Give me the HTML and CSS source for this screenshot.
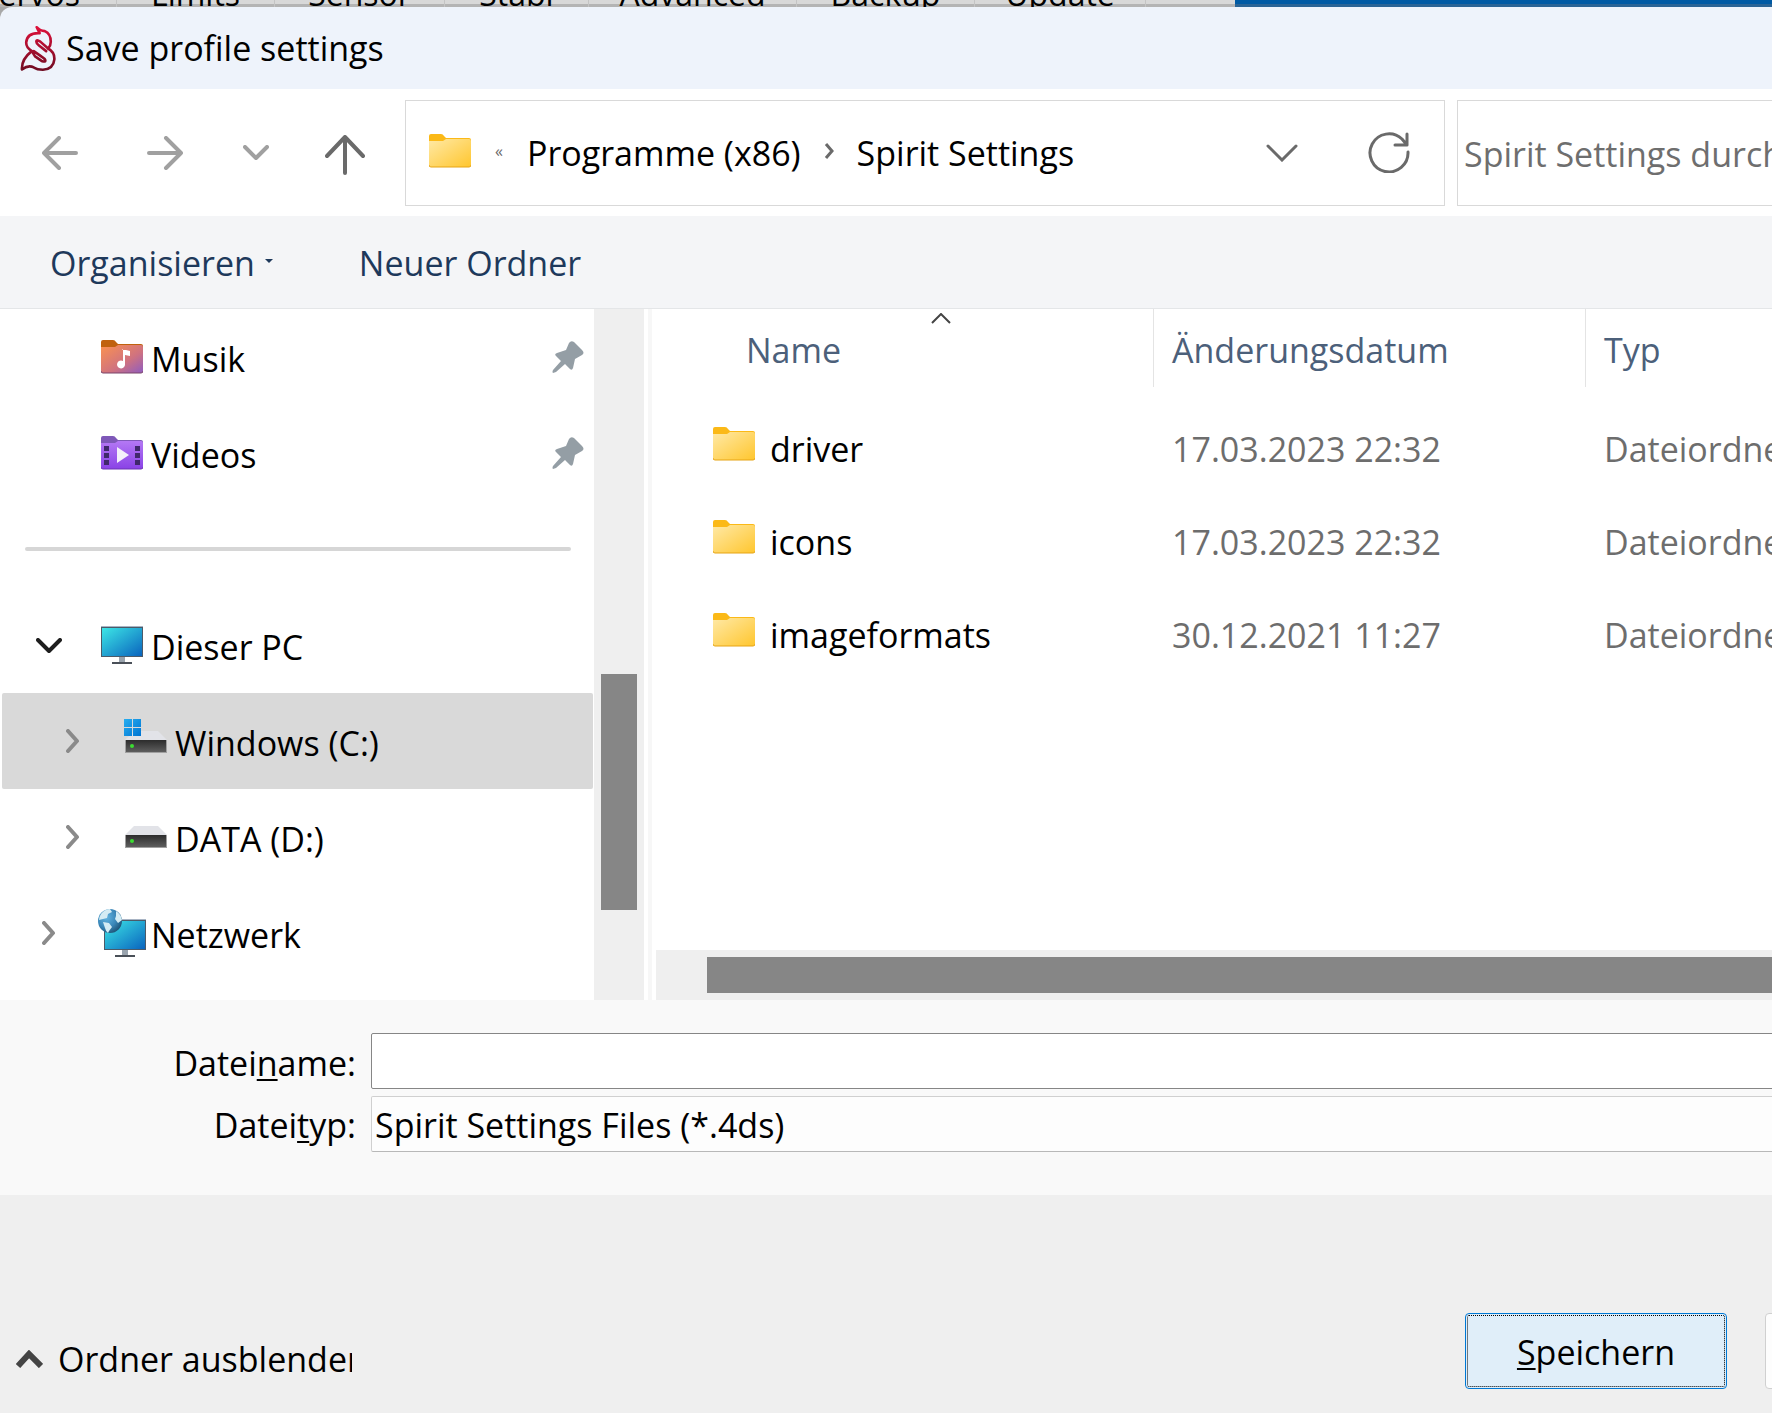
FILE: index.html
```html
<!DOCTYPE html>
<html lang="de">
  <head>
    <meta charset="UTF-8" />
    <meta name="viewport" content="width=device-width, initial-scale=1.0" />
    <title>Save profile settings</title>
    <link rel="stylesheet" href="styles.css">
  </head>
  <body>
    <!-- Shared icon shapes -->
    <svg class="defs" width="0" height="0" aria-hidden="true">
      <defs>
        <linearGradient id="gFolder" x1="0" y1="0" x2="1" y2="1">
          <stop offset="0" stop-color="#ffe9a6" />
          <stop offset="1" stop-color="#ffc62e" />
        </linearGradient>
        <linearGradient id="gMusic" x1="0" y1="0" x2="1" y2="1">
          <stop offset="0" stop-color="#fb9250" />
          <stop offset="0.6" stop-color="#cf7280" />
          <stop offset="1" stop-color="#8f5cc0" />
        </linearGradient>
        <linearGradient id="gVideo" x1="0" y1="0" x2="0" y2="1">
          <stop offset="0" stop-color="#b478f4" />
          <stop offset="1" stop-color="#8a42e6" />
        </linearGradient>
        <linearGradient id="gScreen" x1="0" y1="0" x2="1" y2="1">
          <stop offset="0" stop-color="#3ce6e6" />
          <stop offset="1" stop-color="#0a64be" />
        </linearGradient>
        <linearGradient id="gDrive" x1="0" y1="0" x2="0" y2="1">
          <stop offset="0" stop-color="#2c2c2c" />
          <stop offset="1" stop-color="#5e5e5e" />
        </linearGradient>
        <linearGradient id="gWin" x1="0" y1="0" x2="1" y2="1">
          <stop offset="0" stop-color="#27aef0" />
          <stop offset="1" stop-color="#0074d2" />
        </linearGradient>
        <linearGradient id="gLogo" x1="0" y1="20" x2="0" y2="158" gradientUnits="userSpaceOnUse">
          <stop offset="0" stop-color="#e0103a" />
          <stop offset="1" stop-color="#6e0c22" />
        </linearGradient>
        <radialGradient id="gGlobe" cx="0.35" cy="0.35" r="0.7">
          <stop offset="0" stop-color="#62b4e0" />
          <stop offset="0.6" stop-color="#3a86b8" />
          <stop offset="1" stop-color="#1f5578" />
        </radialGradient>
        <symbol id="folder" viewBox="0 0 42 34">
          <path d="M0 9V2q0-2 2-2h10q2 0 3 2l2 2h23q2 0 2 2v6H0z" fill="#fbb917" />
          <path d="M0 7h14l3-2h23q2 0 2 2v24q0 2-2 2H2q-2 0-2-2z" fill="url(#gFolder)" />
          <path d="M0 31q0 2 2 2h38q2 0 2-2" fill="none" stroke="#e6a415" />
        </symbol>
        <symbol id="folder-music" viewBox="0 0 42 34">
          <path d="M0 9V2q0-2 2-2h10q2 0 3 2l2 2h23q2 0 2 2v6H0z" fill="#c0620e" />
          <path d="M0 7h14l3-2h23q2 0 2 2v24q0 2-2 2H2q-2 0-2-2z" fill="url(#gMusic)" />
          <path d="M0 31q0 2 2 2h38q2 0 2-2" fill="none" stroke="#7a4468" />
          <path d="M21 9l8 2v5l-5-1v10a4 4 0 1 1-2-4V9z" fill="#fff" />
        </symbol>
        <symbol id="folder-video" viewBox="0 0 42 34">
          <path d="M0 9V2q0-2 2-2h10q2 0 3 2l2 2h23q2 0 2 2v6H0z" fill="#7e58b8" />
          <path d="M0 7h14l3-2h23q2 0 2 2v24q0 2-2 2H2q-2 0-2-2z" fill="url(#gVideo)" />
          <path d="M0 31q0 2 2 2h38q2 0 2-2" fill="none" stroke="#6c34b4" />
          <path d="M3 10h5v5H3zM3 17h5v5H3zM3 24h5v5H3zM34 10h5v5h-5zM34 17h5v5h-5zM34 24h5v5h-5z" fill="#40286c" />
          <path d="M16 11l12 8-12 8z" fill="#f4f0fa" />
        </symbol>
        <symbol id="monitor" viewBox="0 0 42 38">
          <path d="M18 31h6v5h-6z" fill="#9aa4ae" />
          <path d="M11 36h20v2H11z" fill="#4a5058" />
          <path d="M0 0h42v31H0z" fill="#4c5a68" />
          <path d="M0 0h42v1H0z" fill="#a8b4c4" />
          <path d="M1 2h40v28H1z" fill="url(#gScreen)" />
        </symbol>
        <symbol id="drive" viewBox="0 0 42 22">
          <path d="M9 0h24l9 9H0z" fill="#e2e3e8" />
          <path d="M0 9h42v13H0z" fill="#a0a0a0" />
          <path d="M1 9h40v12H1z" fill="url(#gDrive)" />
          <circle cx="7" cy="15" r="2" fill="#3cdc32" />
        </symbol>
        <symbol id="pin" viewBox="0 0 32 32">
          <path d="M17 2q2-3 5-1l8 8q3 3 0 5l-7 4-2 9q-1 3-3 1l-5-5-9 8-3 1q-1-1 0-3l8-9-5-5q-2-2 1-3l9-3z" fill="#949ea5" />
        </symbol>
        <symbol id="chevron-right" viewBox="0 0 14 24">
          <path d="M2 2l9 10-9 10" fill="none" stroke="currentColor" stroke-width="4" stroke-linecap="round" stroke-linejoin="round" />
        </symbol>
        <symbol id="chevron-down" viewBox="0 0 26 16">
          <path d="M2 2l11 11L24 2" fill="none" stroke="currentColor" stroke-width="4" stroke-linecap="round" stroke-linejoin="round" />
        </symbol>
      </defs>
    </svg>

    <!-- Window behind the dialog -->
    <div class="back-window">
      <span class="back-tab tab-servos">Servos</span>
      <span class="back-tab tab-limits">Limits</span>
      <span class="back-tab tab-sensor">Sensor</span>
      <span class="back-tab tab-stabi">Stabi</span>
      <span class="back-tab tab-advanced">Advanced</span>
      <span class="back-tab tab-backup">Backup</span>
      <span class="back-tab tab-update">Update</span>
      <span class="back-tab tab-empty"></span>
    </div>

    <div class="dialog">
      <header class="title-bar">
        <svg class="logo" width="36" height="47" viewBox="28 18 110 142" fill="none" stroke="url(#gLogo)" stroke-width="8" stroke-linejoin="round" stroke-linecap="round">
          <path d="M64 97Q46 86 47 70Q50 40 88 42L79 24Q90 36 104 36Q122 44 122 68Q122 80 114 89Q134 100 133 122Q130 152 98 154Q80 154 70 147Q54 138 34 153Q32 122 64 97z" />
          <path d="M114 89L90 68Q78 60 78 68Q78 74 86 80L108 97" />
          <path d="M64 97L74 113L94 127Q108 132 105 124Q103 120 94 114L70 97" />
        </svg>
        <h1>Save profile settings</h1>
      </header>

      <div class="nav-bar">
        <button class="nav-btn" aria-label="Zurück">
          <svg width="36" height="34" viewBox="0 0 36 34" fill="none" stroke="currentColor" stroke-width="4" stroke-linecap="round" stroke-linejoin="round"><path d="M17 2L2 17l15 15M2 17h32" /></svg>
        </button>
        <button class="nav-btn nav-forward" aria-label="Vorwärts">
          <svg width="36" height="34" viewBox="0 0 36 34" fill="none" stroke="currentColor" stroke-width="4" stroke-linecap="round" stroke-linejoin="round"><path d="M19 2l15 15-15 15M34 17H2" /></svg>
        </button>
        <button class="nav-btn nav-recent" aria-label="Zuletzt besucht">
          <svg width="26" height="16"><use href="#chevron-down" /></svg>
        </button>
        <button class="nav-btn nav-up" aria-label="Nach oben">
          <svg width="40" height="40" viewBox="0 0 40 40" fill="none" stroke="currentColor" stroke-width="4" stroke-linecap="round" stroke-linejoin="round"><path d="M2 21L20 2l18 19M20 2v36" /></svg>
        </button>
        <div class="address">
          <svg class="address-icon" width="42" height="34"><use href="#folder" /></svg>
          <span class="more">«</span>
          <a href="#">Programme (x86)</a>
          <svg class="crumb-arrow" width="10" height="16" viewBox="0 0 10 16" fill="none" stroke="currentColor" stroke-width="3"><path d="M2 1l6 7-6 7" /></svg>
          <a href="#">Spirit Settings</a>
          <button class="address-drop" aria-label="Vorherige Orte">
            <svg width="32" height="18" viewBox="0 0 32 18" fill="none" stroke="currentColor" stroke-width="3" stroke-linecap="round"><path d="M2 2l14 14L30 2" /></svg>
          </button>
          <button class="address-reload" aria-label="Aktualisieren">
            <svg width="42" height="42" viewBox="0 0 42 42" fill="none" stroke="currentColor" stroke-width="3" stroke-linecap="round" stroke-linejoin="round"><path d="M40 21a19 19 0 1 1-6-13l5 6M39 3v11H27" /></svg>
          </button>
        </div>
        <input class="search" type="text" aria-label="Suchen" placeholder="Spirit Settings durchsuchen">
      </div>

      <div class="toolbar">
        <button>Organisieren <span class="caret"></span></button>
        <button>Neuer Ordner</button>
      </div>

      <div class="content">
        <nav class="sidebar">
          <ul>
            <li>
              <span class="expander"></span>
              <a href="#"><svg width="42" height="34"><use href="#folder-music" /></svg>Musik</a>
              <svg class="pin" width="32" height="32"><use href="#pin" /></svg>
            </li>
            <li>
              <span class="expander"></span>
              <a href="#"><svg width="42" height="34"><use href="#folder-video" /></svg>Videos</a>
              <svg class="pin" width="32" height="32"><use href="#pin" /></svg>
            </li>
            <li class="divider"></li>
            <li>
              <button class="expander open" aria-label="Dieser PC einklappen"><svg width="26" height="16"><use href="#chevron-down" /></svg></button>
              <a href="#"><svg width="42" height="38"><use href="#monitor" /></svg>Dieser PC</a>
            </li>
            <li class="child selected">
              <button class="expander" aria-label="Windows (C:) ausklappen"><svg width="14" height="24"><use href="#chevron-right" /></svg></button>
              <a href="#">
                <svg width="42" height="44" viewBox="0 0 42 44" overflow="visible">
                  <use href="#drive" y="12" width="42" height="22" />
                  <path d="M-1 0h8v8h-8zM8 0h8v8H8zM-1 9h8v8h-8zM8 9h8v8H8z" fill="url(#gWin)" />
                </svg>Windows (C:)</a>
            </li>
            <li class="child">
              <button class="expander" aria-label="DATA (D:) ausklappen"><svg width="14" height="24"><use href="#chevron-right" /></svg></button>
              <a href="#"><svg width="42" height="22"><use href="#drive" /></svg>DATA (D:)</a>
            </li>
            <li>
              <button class="expander" aria-label="Netzwerk ausklappen"><svg width="14" height="24"><use href="#chevron-right" /></svg></button>
              <a href="#">
                <svg width="42" height="48" viewBox="0 0 42 48" overflow="visible">
                  <use href="#monitor" x="3" y="10" width="42" height="38" />
                  <circle cx="9" cy="12" r="12" fill="url(#gGlobe)" />
                  <path d="M0 5q4-5 9-5l2 3-4 2-1 4-4 1-4 1q0-3 2-6zM2 13l6 1 3 4-3 4-1 2q-2-1-3-5zM15 2q5 3 6 9l-4 3-3-4 1-3z" fill="#d4ecf4" />
                </svg>Netzwerk</a>
            </li>
          </ul>
        </nav>
        <div class="scroll-v"><div class="thumb"></div></div>
        <div class="splitter"></div>

        <main class="files">
          <table>
            <thead>
              <tr>
                <th class="col-name">Name
                  <svg class="sort" width="20" height="11" viewBox="0 0 20 11" fill="none" stroke="#444" stroke-width="2"><path d="M1 10l9-9 9 9" /></svg>
                </th>
                <th class="col-date">Änderungsdatum</th>
                <th class="col-type">Typ</th>
              </tr>
            </thead>
            <tbody>
              <tr>
                <td class="name"><svg width="42" height="34"><use href="#folder" /></svg>driver</td>
                <td>17.03.2023 22:32</td>
                <td>Dateiordner</td>
              </tr>
              <tr>
                <td class="name"><svg width="42" height="34"><use href="#folder" /></svg>icons</td>
                <td>17.03.2023 22:32</td>
                <td>Dateiordner</td>
              </tr>
              <tr>
                <td class="name"><svg width="42" height="34"><use href="#folder" /></svg>imageformats</td>
                <td>30.12.2021 11:27</td>
                <td>Dateiordner</td>
              </tr>
            </tbody>
          </table>
          <div class="scroll-h"><div class="thumb"></div></div>
        </main>
      </div>

      <form class="file-form">
        <label for="fileName">Datei<u>n</u>ame:</label>
        <input id="fileName" type="text">
        <label for="fileType">Datei<u>t</u>yp:</label>
        <select id="fileType">
          <option>Spirit Settings Files (*.4ds)</option>
        </select>
      </form>

      <footer class="footer">
        <button class="hide-folders">
          <svg width="27" height="18" viewBox="0 0 27 18" fill="none" stroke="#444" stroke-width="6"><path d="M2 16L13 4l12 12" /></svg>
          <span>Ordner ausblenden</span>
        </button>
        <button class="btn btn-save"><u>S</u>peichern</button>
        <button class="btn" aria-label="Abbrechen"></button>
      </footer>
    </div>
  </body>
</html>
```
FILE: styles.css
```css
* {
  box-sizing: border-box;
}
body {
  margin: 0;
  min-height: 100vh;
  display: flex;
  flex-direction: column;
  font-family: "Open Sans", "Noto Sans", sans-serif;
  font-size: 34px;
  line-height: 48px;
  color: #000;
  background: #efefef;
  overflow: hidden;
}
button,
input,
select {
  font: inherit;
  color: inherit;
}
button {
  padding: 0;
  border: none;
  background: none;
  cursor: pointer;
}
a {
  color: inherit;
  text-decoration: none;
}
ul {
  list-style: none;
  margin: 0;
  padding: 0;
}
svg {
  display: block;
  flex: none;
}
u {
  text-decoration-thickness: 2px;
  text-underline-offset: 3px;
}
.defs {
  position: absolute;
}

/* Window behind the dialog */
.back-window {
  display: flex;
  align-items: flex-end;
  height: 7px;
  background: linear-gradient(#005aa4 4px, #2a6496 4px);
  overflow: hidden;
}
.back-tab {
  flex: none;
  height: 40px;
  font-size: 32px;
  line-height: 54px;
  text-align: center;
  background: linear-gradient(#d8d8d8 37px, #b4b4b4 37px);
  border-right: 1px solid #c4c4c4;
}
.tab-servos {
  width: 117px;
  padding-right: 36px;
  direction: rtl;
}
.tab-limits {
  width: 158px;
}
.tab-sensor {
  width: 170px;
}
.tab-stabi {
  width: 144px;
}
.tab-advanced {
  width: 208px;
}
.tab-backup {
  width: 178px;
}
.tab-update {
  width: 171px;
}
.tab-empty {
  width: 89px;
  border: none;
}

/* Dialog */
.dialog {
  flex: 1;
  display: flex;
  flex-direction: column;
  background: #a8a8a8;
}
.title-bar {
  display: flex;
  align-items: center;
  gap: 10px;
  height: 82px;
  padding-left: 20px;
  background: #eef3fb;
  border-top-left-radius: 12px;
}
.title-bar h1 {
  margin: 0;
  font-size: 34px;
  font-weight: 400;
}

/* Navigation */
.nav-bar {
  display: flex;
  align-items: center;
  height: 127px;
  padding-left: 42px;
  background: #fff;
}
.nav-btn {
  color: #a0a0a0;
}
.nav-forward {
  margin-left: 69px;
}
.nav-recent {
  margin-left: 60px;
}
.nav-up {
  margin-left: 56px;
  padding-top: 4px;
  color: #6a6a6a;
}
.address {
  flex: 1;
  display: flex;
  align-items: center;
  height: 106px;
  margin-left: 40px;
  padding: 0 34px 0 23px;
  border: 1px solid #d9d9d9;
}
.address button {
  color: #6a6a6a;
}
.address-icon {
  margin-bottom: 4px;
}
.more {
  margin: 0 24px;
  padding-bottom: 4px;
  font-size: 16px;
  color: #6a6a6a;
}
.crumb-arrow {
  margin: 0 23px 4px;
  color: #6a6a6a;
}
.address .address-drop {
  margin-left: auto;
  margin-right: 70px;
}
.address-reload {
  padding-bottom: 2px;
}
.search {
  width: 340px;
  height: 106px;
  margin-left: 12px;
  margin-right: -25px;
  padding: 2px 6px 0;
  border: 1px solid #d9d9d9;
  background: #fff;
}
.search::placeholder {
  color: #6e6e6e;
  opacity: 1;
}

/* Toolbar */
.toolbar {
  display: flex;
  align-items: center;
  gap: 86px;
  height: 93px;
  padding-top: 2px;
  padding-left: 50px;
  background: #f4f5f7;
  border-bottom: 1px solid #e4e6e8;
  color: #1e395b;
}
.toolbar button {
  display: flex;
  align-items: center;
  gap: 10px;
}
.caret {
  margin-bottom: 4px;
  border: 4px solid transparent;
  border-top-color: #1e395b;
  border-bottom: none;
}

/* Sidebar */
.content {
  display: flex;
  height: 691px;
  background: #fff;
}
.sidebar {
  width: 594px;
  padding: 0 1px 0 2px;
}
.sidebar li {
  display: flex;
  align-items: center;
  height: 96px;
  padding-top: 4px;
  padding-left: 32px;
}
.sidebar .child {
  padding-left: 56px;
}
.sidebar a {
  display: flex;
  align-items: center;
  gap: 8px;
}
.sidebar a svg {
  margin-bottom: 4px;
}
.sidebar .selected {
  background: #d9d9d9;
  border-radius: 2px;
}
.expander {
  display: flex;
  justify-content: center;
  width: 30px;
  margin-right: 37px;
  margin-bottom: 4px;
  color: #8a8a8a;
}
.expander.open {
  margin-bottom: 2px;
  color: #1e1e1e;
}
.pin {
  margin-left: auto;
  margin-right: 9px;
  margin-bottom: 4px;
}
.sidebar .divider {
  padding: 0 22px 0 23px;
}
.divider::before {
  content: "";
  flex: 1;
  height: 4px;
  border-radius: 2px;
  background: #d6d6d6;
}
.scroll-v {
  width: 50px;
  padding: 365px 7px 0;
  background: #efefef;
}
.scroll-v .thumb {
  height: 236px;
}
.thumb {
  background: #868686;
}
.splitter {
  width: 12px;
  border: 4px solid #fff;
  border-top: none;
  border-bottom: none;
  background: #f7f7f7;
}

/* File list */
.files {
  flex: 1;
  min-width: 0;
  display: flex;
  flex-direction: column;
  justify-content: space-between;
  overflow: hidden;
}
.files table {
  width: 1240px;
  table-layout: fixed;
  border-collapse: separate;
  border-spacing: 0;
}
.files th {
  position: relative;
  height: 78px;
  padding: 4px 18px 0;
  border-right: 1px solid #e4e4e4;
  font-weight: 400;
  text-align: left;
  color: #4c607a;
}
.files .col-name {
  width: 498px;
  padding-left: 90px;
}
.col-date {
  width: 432px;
}
.sort {
  position: absolute;
  top: 4px;
  left: 275px;
}
.files tbody::before {
  content: "";
  display: block;
  height: 15px;
}
.files td {
  height: 93px;
  padding: 0 18px;
  color: #6d6d6d;
}
.files .name {
  display: flex;
  align-items: center;
  gap: 15px;
  padding-left: 57px;
  color: #000;
}
.name svg {
  margin-bottom: 10px;
}
.scroll-h {
  height: 50px;
  padding: 7px 0 7px 51px;
  background: #efefef;
}
.scroll-h .thumb {
  height: 36px;
}

/* File name and type */
.file-form {
  display: grid;
  grid-template-columns: 356px 1fr;
  column-gap: 15px;
  row-gap: 6px;
  align-items: center;
  height: 195px;
  padding: 33px 0 43px;
  margin: 0;
  background: #f9f9f9;
}
.file-form label {
  padding-top: 3px;
  text-align: right;
}
.file-form input,
.file-form select {
  height: 56px;
  margin-right: -24px;
  padding: 2px 3px 0;
  border: 1px solid #868686;
  border-radius: 2px;
  background: #fff;
}
.file-form select {
  appearance: none;
  border-color: #d0d0d0;
  border-bottom-color: #b8b8b8;
  background: #fdfdfd;
}

/* Footer */
.footer {
  flex: 1;
  display: flex;
  align-items: flex-end;
  gap: 38px;
  padding: 0 0 24px 16px;
  background: #efefef;
  overflow: hidden;
}
.hide-folders {
  display: flex;
  align-items: center;
  gap: 15px;
  height: 60px;
  width: 336px;
  margin-right: auto;
  white-space: nowrap;
  overflow: hidden;
}
.btn {
  flex: none;
  width: 262px;
  height: 76px;
  padding-top: 2px;
  border: 1px solid #d0d0d0;
  border-radius: 4px;
  background: #fdfdfd;
}
.btn:last-child {
  margin-right: -255px;
}
.btn-save {
  border-color: #0078d4;
  background: #e0eef9;
  outline: 1px dotted #000;
  outline-offset: -3px;
}
```
